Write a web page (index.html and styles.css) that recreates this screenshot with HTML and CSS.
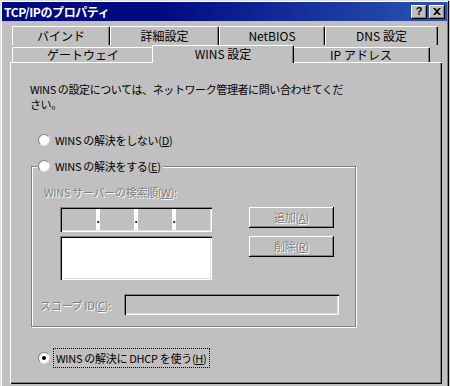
FILE: index.html
```html
<!DOCTYPE html>
<html lang="ja">
<head>
    <meta charset="UTF-8">
    <title>TCP/IPのプロパティ</title>
    <link rel="stylesheet" href="styles.css">
</head>
<body>
    <div class="window">
        <div class="titlebar">
            <span class="title">TCP/IPのプロパティ</span>
            <div class="caption-btns">
                <span class="cbtn help">?</span>
                <span class="cbtn close">
                    <svg width="8" height="7" viewBox="0 0 8 7"><path d="M0 0h2l2 2 2-2h2L5 3.5 8 7H6L4 5 2 7H0l3-3.5z" fill="#000"/></svg>
                </span>
            </div>
        </div>

        <div class="tabs">
            <div class="tab-row back">
                <div class="tab w98">バインド</div>
                <div class="tab w109">詳細設定</div>
                <div class="tab w106">NetBIOS</div>
                <div class="tab w113">DNS 設定</div>
            </div>
            <div class="tab-row front">
                <div class="tab w142">ゲートウェイ</div>
                <div class="tab w146 selected">WINS 設定</div>
                <div class="tab w138">IP アドレス</div>
            </div>
        </div>

        <div class="panel">
            <p class="desc">WINS の設定については、ネットワーク管理者に問い合わせてくだ<br>さい。</p>

            <label class="radio first"><span class="dot"></span><span>WINS の解決をしない(<u>D</u>)</span></label>

            <fieldset class="group">
                <legend><label class="radio"><span class="dot"></span><span>WINS の解決をする(<u>E</u>)</span></label></legend>

                <div class="disabled server-label">WINS サーバーの検索順(<u>W</u>):</div>

                <div class="server-area">
                    <div class="server-fields">
                        <div class="ip-field">
                            <span class="octet"></span><span class="sep">.</span>
                            <span class="octet"></span><span class="sep">.</span>
                            <span class="octet"></span><span class="sep">.</span>
                            <span class="octet"></span>
                        </div>
                        <div class="listbox"></div>
                    </div>
                    <div class="side-btns">
                        <div class="btn disabled">追加(<u>A</u>)</div>
                        <div class="btn disabled">削除(<u>R</u>)</div>
                    </div>
                </div>

                <div class="scope">
                    <span class="disabled">スコープ ID(<u>C</u>):</span>
                    <div class="scope-field"></div>
                </div>
            </fieldset>

            <label class="radio last"><span class="dot checked"></span><span class="focus">WINS の解決に DHCP を使う(<u>H</u>)</span></label>
        </div>
    </div>
</body>
</html>
```

FILE: styles.css
```css
* {
    box-sizing: border-box;
}
body {
    margin: 0;
    width: 450px;
    height: 386px;
    overflow: hidden;
    background: #c0c0c0;
    font-family: "Noto Sans CJK JP", sans-serif;
    font-size: 11px;
    color: #000;
}
u {
    text-decoration: underline;
    text-underline-offset: 1px;
}
.window {
    width: 449px;
    height: 420px;
    padding: 2px;
    background: #c0c0c0;
    box-shadow: inset 1px 1px #dfdfdf, inset -1px -1px #000, inset 2px 2px #fff, inset -2px -2px #808080;
}
.titlebar {
    height: 19px;
    display: flex;
    align-items: center;
    justify-content: space-between;
    padding: 0 2px 0 2px;
    background: linear-gradient(to right, #000a80 35%, #2b55b4);
}
.title {
    color: #fff;
    font-size: 12px;
    font-weight: bold;
    letter-spacing: -0.4px;
}
.caption-btns {
    display: flex;
    gap: 2px;
}
.cbtn {
    width: 16px;
    height: 14px;
    display: flex;
    align-items: center;
    justify-content: center;
    background: #c0c0c0;
    box-shadow: inset -1px -1px #000, inset 1px 1px #fff, inset -2px -2px #808080;
    font-family: "Liberation Sans", sans-serif;
    font-weight: bold;
    font-size: 11px;
    line-height: 1;
}

/* tabs */
.tabs {
    margin: 5px 0 0 10px;
    width: 426px;
}
.tab-row {
    display: flex;
}
.tab {
    text-align: center;
    font-size: 12px;
    border-top: 1px solid #fff;
    border-left: 1px solid #fff;
    border-right: 1px solid #000;
    box-shadow: inset -1px 0 #808080;
    border-radius: 2px 2px 0 0;
}
.back .tab {
    height: 19px;
    line-height: 17px;
}
.front {
    height: 17px;
}
.front .tab {
    margin-top: 2px;
    height: 15px;
    line-height: 14px;
}
.front .tab.selected {
    margin: 0 -2px -1px;
    height: 18px;
    line-height: 15px;
    position: relative;
    z-index: 1;
    background: #c0c0c0;
}
.w98 { width: 98px; }
.w109 { width: 109px; }
.w106 { width: 106px; }
.w113 { width: 113px; }
.w142 { width: 142px; }
.w146 { width: 142px; }
.w138 { width: 138px; }

/* panel */
.panel {
    margin-left: 8px;
    width: 432px;
    height: 322px;
    padding-top: 20px;
    box-shadow: inset 1px 1px #fff, inset -1px -1px #000, inset -2px -2px #808080;
}
.desc {
    margin: 0 0 0 20px;
    line-height: 15px;
    letter-spacing: -0.4px;
}
.radio {
    display: flex;
    align-items: center;
    height: 14px;
    letter-spacing: -0.3px;
}
.radio.first {
    margin: 21px 0 0 28px;
}
.radio.last {
    margin: 24px 0 0 28px;
}
.dot {
    width: 12px;
    height: 12px;
    margin-right: 5px;
    border-radius: 50%;
    background: #fff;
    border: 1px solid;
    border-color: #808080 #dfdfdf #dfdfdf #808080;
    display: flex;
    align-items: center;
    justify-content: center;
}
.dot.checked::after {
    content: "";
    width: 4px;
    height: 4px;
    border-radius: 50%;
    background: #000;
}
.focus {
    outline: 1px dotted #000;
    outline-offset: 1px;
    padding: 0 1px;
}

/* group box */
.group {
    margin: 12px 0 0 21px;
    width: 325px;
    height: 168px;
    padding: 0;
    border: 1px solid #808080;
    box-shadow: 1px 1px #fff, inset 1px 1px #fff;
}
.group legend {
    margin-left: 5px;
    padding: 0 2px 0 1px;
    background: #c0c0c0;
}
.disabled {
    color: #808080;
    text-shadow: 1px 1px 0 #fff;
    letter-spacing: -0.3px;
}
.server-label {
    margin: 12px 0 0 12px;
    height: 14px;
    line-height: 14px;
}
.server-area {
    display: flex;
    margin: 8px 0 0 28px;
    gap: 37px;
}
.server-fields {
    width: 152px;
    display: flex;
    flex-direction: column;
    gap: 4px;
}
.ip-field {
    height: 25px;
    display: flex;
    box-shadow: inset 1px 1px #808080, inset 2px 2px #000, inset -1px -1px #fff, inset -2px -2px #dfdfdf;
    padding: 2px;
}
.octet {
    flex: 1;
}
.sep {
    width: 4px;
    background: #fff;
    color: #000;
    font-size: 10px;
    line-height: 20px;
    text-align: center;
    font-weight: bold;
}
.listbox {
    height: 44px;
    background: #fff;
    box-shadow: inset 1px 1px #808080, inset 2px 2px #000, inset -1px -1px #fff, inset -2px -2px #dfdfdf;
}
.side-btns {
    display: flex;
    flex-direction: column;
    gap: 8px;
}
.btn {
    width: 85px;
    height: 21px;
    line-height: 21px;
    text-align: center;
    box-shadow: inset -1px -1px #000, inset 1px 1px #fff, inset -2px -2px #808080;
}
.scope {
    display: flex;
    align-items: center;
    margin: 14px 0 0 8px;
    gap: 13px;
}
.scope-field {
    width: 215px;
    height: 21px;
    box-shadow: inset 1px 1px #808080, inset 2px 2px #000, inset -1px -1px #fff, inset -2px -2px #dfdfdf;
}
```
